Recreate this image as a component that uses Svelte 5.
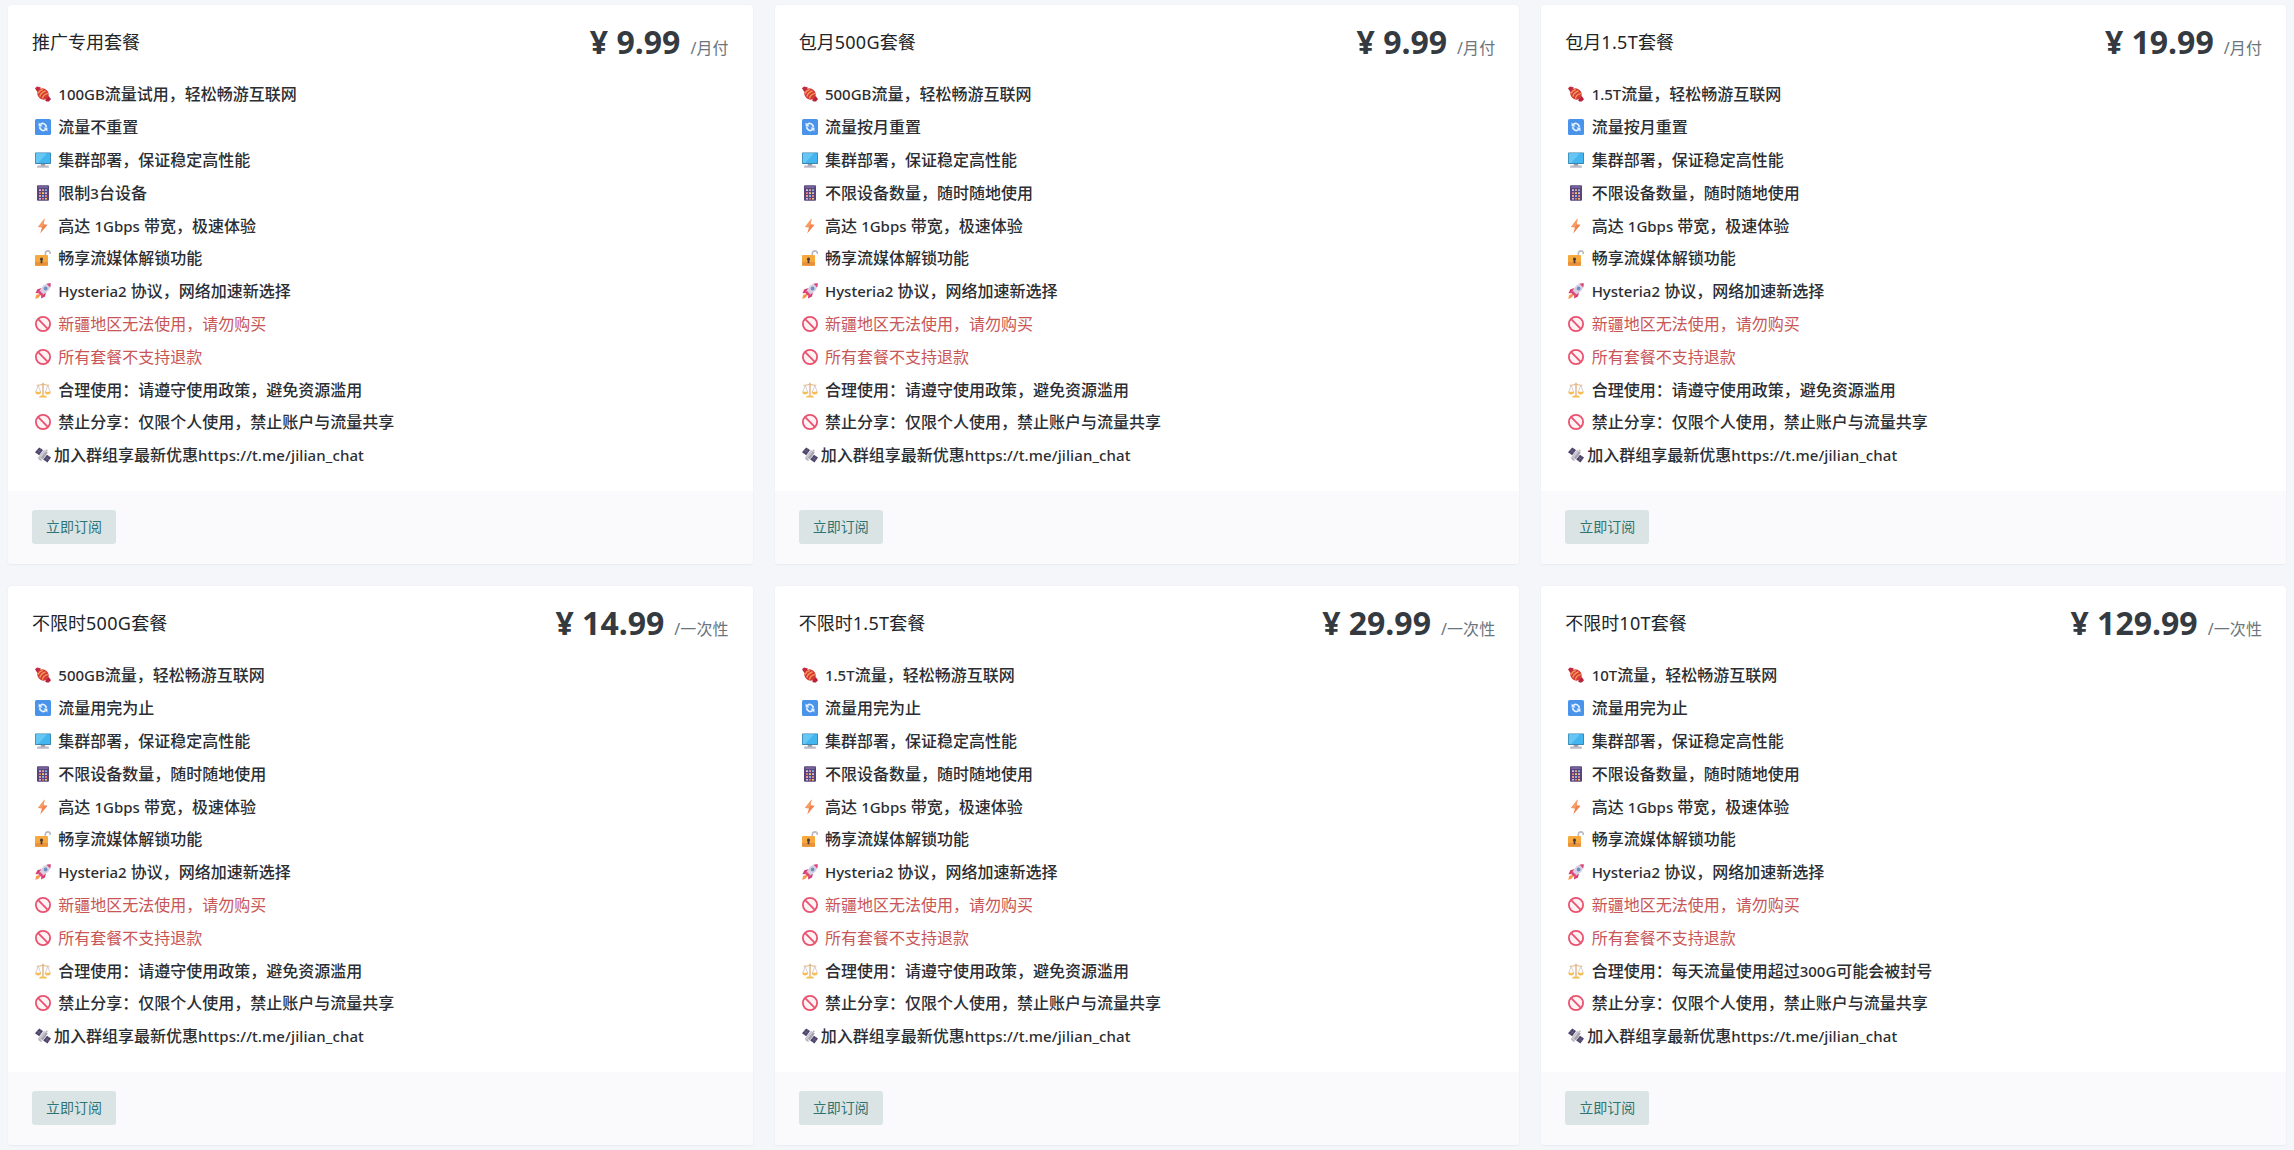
<script>
  const shared = {
    stable: '集群部署，保证稳定高性能',
    devices: '不限设备数量，随时随地使用',
    fair: '合理使用：请遵守使用政策，避免资源滥用'
  };

  const icons = ['candy', 'reset', 'screen', 'keypad', 'bolt', 'lock', 'rocket', 'ban', 'ban', 'scales', 'ban', 'satellite'];

  function features(traffic, reset, devices = shared.devices, fair = shared.fair) {
    return [
      traffic + '，轻松畅游互联网',
      reset,
      shared.stable,
      devices,
      '高达 1Gbps 带宽，极速体验',
      '畅享流媒体解锁功能',
      'Hysteria2 协议，网络加速新选择',
      '新疆地区无法使用，请勿购买',
      '所有套餐不支持退款',
      fair,
      '禁止分享：仅限个人使用，禁止账户与流量共享',
      '加入群组享最新优惠https://t.me/jilian_chat'
    ];
  }

  const plans = [
    { name: '推广专用套餐', price: '9.99', period: '月付', items: features('100GB流量试用', '流量不重置', '限制3台设备') },
    { name: '包月500G套餐', price: '9.99', period: '月付', items: features('500GB流量', '流量按月重置') },
    { name: '包月1.5T套餐', price: '19.99', period: '月付', items: features('1.5T流量', '流量按月重置') },
    { name: '不限时500G套餐', price: '14.99', period: '一次性', items: features('500GB流量', '流量用完为止') },
    { name: '不限时1.5T套餐', price: '29.99', period: '一次性', items: features('1.5T流量', '流量用完为止') },
    { name: '不限时10T套餐', price: '129.99', period: '一次性', items: features('10T流量', '流量用完为止', shared.devices, '合理使用：每天流量使用超过300G可能会被封号') }
  ];

  // Splits a line into Latin and Chinese runs so each can be set in its own size.
  function runs(text) {
    return text.match(/[\x21-\x7e]+|[^\x21-\x7e]+/g).map((t) => ({ t, latin: /^[\x21-\x7e]/.test(t) }));
  }
</script>

{#snippet icon(name)}
  <svg class="icon" viewBox="0 0 16 16" aria-hidden="true">
    {#if name === 'candy'}
      <path d="M0 2.2 2 .4 4.2.9 5.8 1.4 4.6 4.6 2.4 6 1.2 4.2Z" fill="#c4283f" />
      <path d="M16 13.2 13.8 15.6 11.8 15.4 10.2 14.8 11.4 11.6 13.8 10 14.8 11.6Z" fill="#b8213c" />
      <ellipse cx="8" cy="8" rx="6" ry="5.4" transform="rotate(42 8 8)" fill="#d43b38" />
      <path d="M3 7.6Q4.2 4.6 7.8 3.4M4.8 10.6Q5.6 6.6 10.6 4.8M7.4 12.6Q7.8 8.8 12.8 7.3" fill="none" stroke="#f59a55" stroke-width="1.4" />
    {:else if name === 'reset'}
      <rect width="16" height="16" rx="1.6" fill="#4993eb" />
      <path d="M5.2 5.6Q8.6 3 10.9 6.4L11.2 8M10.8 10.4Q7.4 13 5.1 9.6L4.8 8" fill="none" stroke="#e6f2ff" stroke-width="1.7" />
      <path d="M3.6 3.4V7.6H7.6ZM12.4 12.6V8.4H8.4Z" fill="#e6f2ff" />
    {:else if name === 'screen'}
      <path d="M5.8 11.5H10.2V14H5.8Z" fill="#9b9ba5" />
      <path d="M2.4 13.6H13.6L14 15.8H2Z" fill="#bdbac4" />
      <rect y=".4" width="16" height="11.6" rx=".7" fill="#397fa8" />
      <rect x=".8" y="1.2" width="14.4" height="9.9" fill="#43b5ef" />
      <path d="M.8 1.2H12L3.2 11.1H.8Z" fill="#66c7f4" />
    {:else if name === 'keypad'}
      <rect x="2" y=".2" width="12" height="15.6" rx="1" fill="#584679" />
      <rect x="3.3" y="1.3" width="9.4" height="1.6" fill="#7c69a3" />
      <path d="M4 4.2H6V6H4ZM10 7.2H12V9H10ZM4 13H6V14.6H4Z" fill="#d4b8e8" />
      <path d="M7 4.2H9V6H7ZM4 10.1H6V11.9H4Z" fill="#f09c91" />
      <path d="M10 4.2H12V6H10ZM7 10.1H9V11.9H7Z" fill="#79b6eb" />
      <path d="M4 7.2H6V9H4ZM10 10.1H12V11.9H10ZM7 13H9V14.6H7Z" fill="#e87b7e" />
      <path d="M7 7.2H9V9H7ZM10 13H12V14.6H10Z" fill="#f2cb63" />
    {:else if name === 'bolt'}
      <path d="M9.6.6 3 9 7 9.5 5.2 15.6 12.6 6.8 8.6 6.2Z" fill="#ee8350" />
      <path d="M9.6.6 3 9 7.6 8.8 8.6 6.2Z" fill="#f79d63" />
    {:else if name === 'lock'}
      <path d="M10.3 6V4Q10.3.9 13 .9 15.4.9 15.4 4" fill="none" stroke="#b9b9c4" stroke-width="1.6" />
      <rect y="5.1" width="13" height="10.7" rx="1" fill="#f6aa3e" />
      <path d="M0 12H13V14.8Q13 15.8 12 15.8H1Q0 15.8 0 14.8Z" fill="#e9923a" />
      <path d="M6.5 7.6A1.6 1.6 0 0 1 7.4 10.5V13.2H5.6V10.5A1.6 1.6 0 0 1 6.5 7.6Z" fill="#4b3c42" />
    {:else if name === 'rocket'}
      <path d="M1.2 12 4.5 10.8 5.4 12.6 3.2 14.9.2 15.8Z" fill="#f79a4a" />
      <path d="M6.8 5 2.4 6.2.4 10.2 5 9.9ZM11 9.2 10 13.6 6 15.6 6.4 11Z" fill="#d93c72" />
      <path d="M15.7.3Q11.3 0 8.2 2.6L3.3 9.4 6.6 12.7 13.4 7.8Q16 4.7 15.7.3Z" fill="#d5d1e3" />
      <path d="M15.7.3Q13.3 0 11.6.8L15.2 4.4Q16 2.7 15.7.3ZM4.8 7.7 8.3 11.2 6.3 13 3 9.7Z" fill="#df4779" />
      <circle cx="10.6" cy="5.5" r="1.9" fill="#6f8fc0" />
    {:else if name === 'ban'}
      <circle cx="8" cy="8" r="7.1" fill="#fff2f5" stroke="#e9526f" stroke-width="1.8" />
      <path d="M3.2 3.2 12.8 12.8" stroke="#e9526f" stroke-width="1.8" />
    {:else if name === 'scales'}
      <path d="M7.3.8H8.7V13.6H7.3Z" fill="#e0b184" />
      <path d="M1.6 3.3Q5 3.4 8 2.2 11 3.4 14.4 3.3" fill="none" stroke="#e3b780" stroke-width="1.1" />
      <path d="M3.2 3.4.8 10M3.2 3.4 5.7 10M12.8 3.4 10.3 10M12.8 3.4 15.2 10" stroke="#c7b9b7" stroke-width=".7" />
      <path d="M0 9.8H6.5Q5.8 12.6 3.2 12.6.7 12.6 0 9.8ZM9.5 9.8H16Q15.3 12.6 12.8 12.6 10.2 12.6 9.5 9.8ZM4 15.6Q4.4 13.2 8 13.2 11.6 13.2 12 15.6Z" fill="#f6bd55" />
    {:else}
      <path d="M4.2.6 8 3 4.2 8.2 0 5.2ZM12 7.8 16 10.6 12.4 15.4 8.2 12.6Z" fill="#4b4267" />
      <path d="M2.1 3 6.2 5.6M10.2 10.2 14.3 13M6 1.8 2.2 6.6M14 9.2 10.4 14" stroke="#8379a0" stroke-width=".5" />
      <path d="M9 3.2 12.8 5.6 7.8 12.4 4 9.6Z" fill="#a7a4b0" />
      <path d="M9 3.2 10.8 4.4 5.8 11 4 9.6Z" fill="#cbc8d1" />
      <path d="M3.2 9.6Q2.6 13.6 7 14L6.2 11.8Z" fill="#b5b2bd" />
      <circle cx="11.6" cy="3.6" r="1.1" fill="#b8b5c0" />
    {/if}
  </svg>
{/snippet}

<main class="plans">
  {#each plans as plan}
    <article class="card">
      <header class="head">
        <h3 class="name">{#each runs(plan.name) as run}<span class:wide={run.latin}>{run.t}</span>{/each}</h3>
        <div class="cost"><span class="price">¥ {plan.price}</span><span class="period">/{plan.period}</span></div>
      </header>
      <ul class="list">
        {#each plan.items as item, i}
          <li class="row" class:warn={i === 7 || i === 8} class:tight={i === 11}>
            {@render icon(icons[i])}
            <span class="text">{#each runs(item) as run}<span class:latin={run.latin} class:link={run.t.startsWith('http')}>{run.t}</span>{/each}</span>
          </li>
        {/each}
      </ul>
      <footer class="foot"><button class="buy" type="button">立即订阅</button></footer>
    </article>
  {/each}
</main>

<style>
  :global(body) {
    margin: 0;
    background: #f5f6fa;
  }

  .plans {
    box-sizing: border-box;
    height: 1150px;
    padding: 5px 8px 0;
    display: grid;
    grid-template-columns: repeat(3, 1fr);
    grid-template-rows: 559px 559px;
    gap: 22px;
    overflow: hidden;
    font-family: 'Noto Sans', 'Noto Sans CJK SC', sans-serif;
    color: #343a40;
  }

  .card {
    display: flex;
    flex-direction: column;
    background: #fff;
    border-radius: 3px;
    box-shadow: 0 1px 2px rgba(60, 80, 120, 0.06), 0 0 1px rgba(60, 80, 120, 0.1);
    overflow: hidden;
  }

  .head {
    height: 73px;
    padding: 0 24px;
    display: flex;
    justify-content: space-between;
  }

  .name {
    margin: 0;
    padding-top: 24px;
    font-size: 18px;
    line-height: 27px;
    font-weight: 400;
    color: #212529;
  }

  .wide {
    letter-spacing: 0.3px;
  }

  .cost {
    padding-top: 13px;
    line-height: 48px;
    white-space: nowrap;
  }

  .price {
    font-size: 32px;
    font-weight: 700;
    color: #343a40;
  }

  .period {
    margin-left: 10px;
    font-size: 16px;
    letter-spacing: 0.1px;
    color: #6c757d;
  }

  .list {
    flex: 1;
    margin: 0;
    padding: 0 27px;
    list-style: none;
  }

  .row {
    height: 32.8px;
    display: flex;
    align-items: center;
    gap: 7.3px;
    font-size: 16px;
    line-height: 24px;
    font-weight: 500;
    color: #2b2e33;
    white-space: pre;
  }

  .row.tight {
    gap: 3px;
  }

  .row.warn {
    font-weight: 400;
    color: #c95656;
  }

  .icon {
    width: 16px;
    height: 16px;
    flex: none;
  }

  .latin {
    font-size: 15px;
  }

  .latin.link {
    letter-spacing: 0.11px;
  }

  .foot {
    height: 73px;
    box-sizing: border-box;
    padding: 19px 24px 0;
    background: #fafafc;
  }

  .buy {
    display: block;
    width: 84px;
    height: 34px;
    padding: 0;
    border: 0;
    border-radius: 3px;
    background: #dae4e5;
    color: #2f7474;
    font: 400 14px/34px 'Noto Sans', 'Noto Sans CJK SC', sans-serif;
  }
</style>
